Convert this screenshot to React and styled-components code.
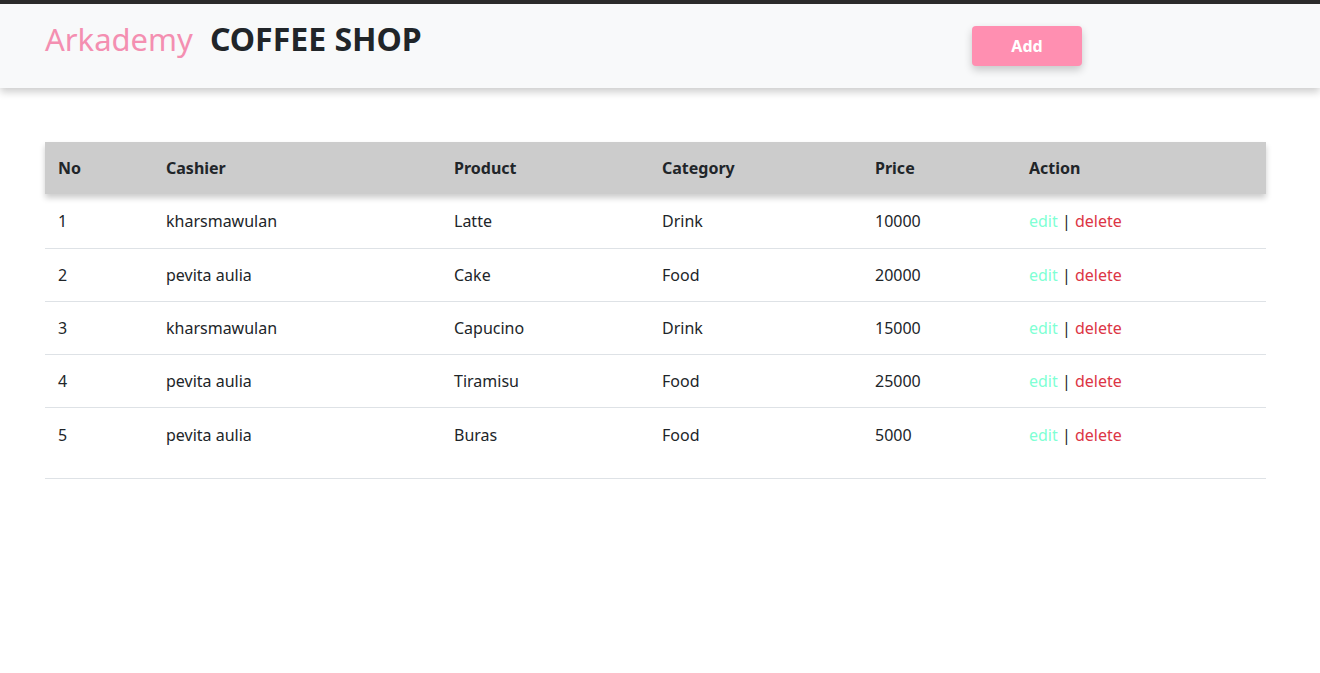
import React from "react";
import styled, { createGlobalStyle } from "styled-components";

const GlobalStyle = createGlobalStyle`
    body {
        margin: 0;
        background: #ffffff;
        font-family: "Noto Sans", "Open Sans", sans-serif;
        color: #212529;
    }
`;

const Navbar = styled.nav`
    height: 84px;
    border-top: 4px solid #2b2b2b;
    background-color: #f8f9fa;
    box-shadow: 0px 4px 8px 0px rgba(0, 0, 0, 0.2);
    display: flex;
    align-items: flex-start;
    padding: 0 45px;
`;

const Brand = styled.div`
    display: flex;
    align-items: baseline;
    gap: 17px;
    margin-top: 13px;
    width: 927px;
`;

const BrandName = styled.span`
    font-size: 31px;
    color: #f48fb1;
`;

const ShopName = styled.span`
    font-size: 32px;
    font-weight: 700;
    color: #212529;
`;

const AddButton = styled.button`
    margin-top: 22px;
    width: 110px;
    height: 40px;
    border: none;
    border-radius: 4px;
    background-color: #ff8fb1;
    color: #ffffff;
    font-family: inherit;
    font-size: 16px;
    font-weight: 700;
    box-shadow: 0px 4px 8px rgba(0, 0, 0, 0.2);
`;

const Content = styled.main`
    padding: 54px 54px 0 45px;
`;

const Table = styled.table`
    width: 100%;
    table-layout: fixed;
    border-collapse: collapse;
    font-size: 16px;
    border-bottom: 1px solid #dee2e6;
`;

const HeadRow = styled.tr`
    background-color: #cccccc;
    box-shadow: 0px 4px 6px rgba(0, 0, 0, 0.2);
`;

const Th = styled.th`
    box-sizing: border-box;
    height: 52px;
    padding: 0 13px;
    text-align: left;
    font-weight: 700;
    width: ${(p) => p.w}px;
`;

const Row = styled.tr`
    border-top: ${(p) => (p.first ? "none" : "1px solid #dee2e6")};
`;

const Td = styled.td`
    height: ${(p) => p.h}px;
    padding: 0 13px;
    vertical-align: ${(p) => (p.last ? "top" : "middle")};
    padding-top: ${(p) => (p.last ? 16 : 0)}px;
    box-sizing: border-box;
`;

const EditLink = styled.a`
    color: #7fffd4;
    text-decoration: none;
`;

const DeleteLink = styled.a`
    color: #dc3545;
    text-decoration: none;
`;

const columns = [
    { label: "No", w: 108 },
    { label: "Cashier", w: 288 },
    { label: "Product", w: 208 },
    { label: "Category", w: 213 },
    { label: "Price", w: 154 },
    { label: "Action", w: 250 },
];

const orders = [
    { no: 1, cashier: "kharsmawulan", product: "Latte", category: "Drink", price: 10000 },
    { no: 2, cashier: "pevita aulia", product: "Cake", category: "Food", price: 20000 },
    { no: 3, cashier: "kharsmawulan", product: "Capucino", category: "Drink", price: 15000 },
    { no: 4, cashier: "pevita aulia", product: "Tiramisu", category: "Food", price: 25000 },
    { no: 5, cashier: "pevita aulia", product: "Buras", category: "Food", price: 5000 },
];

const App = () => {
    return (
        <>
            <GlobalStyle />
            <Navbar>
                <Brand>
                    <BrandName>Arkademy</BrandName>
                    <ShopName>COFFEE SHOP</ShopName>
                </Brand>
                <AddButton>Add</AddButton>
            </Navbar>
            <Content>
                <Table>
                    <thead>
                        <HeadRow>
                            {columns.map((c) => (
                                <Th key={c.label} w={c.w}>
                                    {c.label}
                                </Th>
                            ))}
                        </HeadRow>
                    </thead>
                    <tbody>
                        {orders.map((o, i) => {
                            const last = i === orders.length - 1;
                            const h = last ? 71 : i === 0 ? 54 : 53;
                            return (
                                <Row key={o.no} first={i === 0}>
                                    <Td h={h} last={last}>{o.no}</Td>
                                    <Td h={h} last={last}>{o.cashier}</Td>
                                    <Td h={h} last={last}>{o.product}</Td>
                                    <Td h={h} last={last}>{o.category}</Td>
                                    <Td h={h} last={last}>{o.price}</Td>
                                    <Td h={h} last={last}>
                                        <EditLink href="#">edit</EditLink> |{" "}
                                        <DeleteLink href="#">delete</DeleteLink>
                                    </Td>
                                </Row>
                            );
                        })}
                    </tbody>
                </Table>
            </Content>
        </>
    );
};

export default App;
